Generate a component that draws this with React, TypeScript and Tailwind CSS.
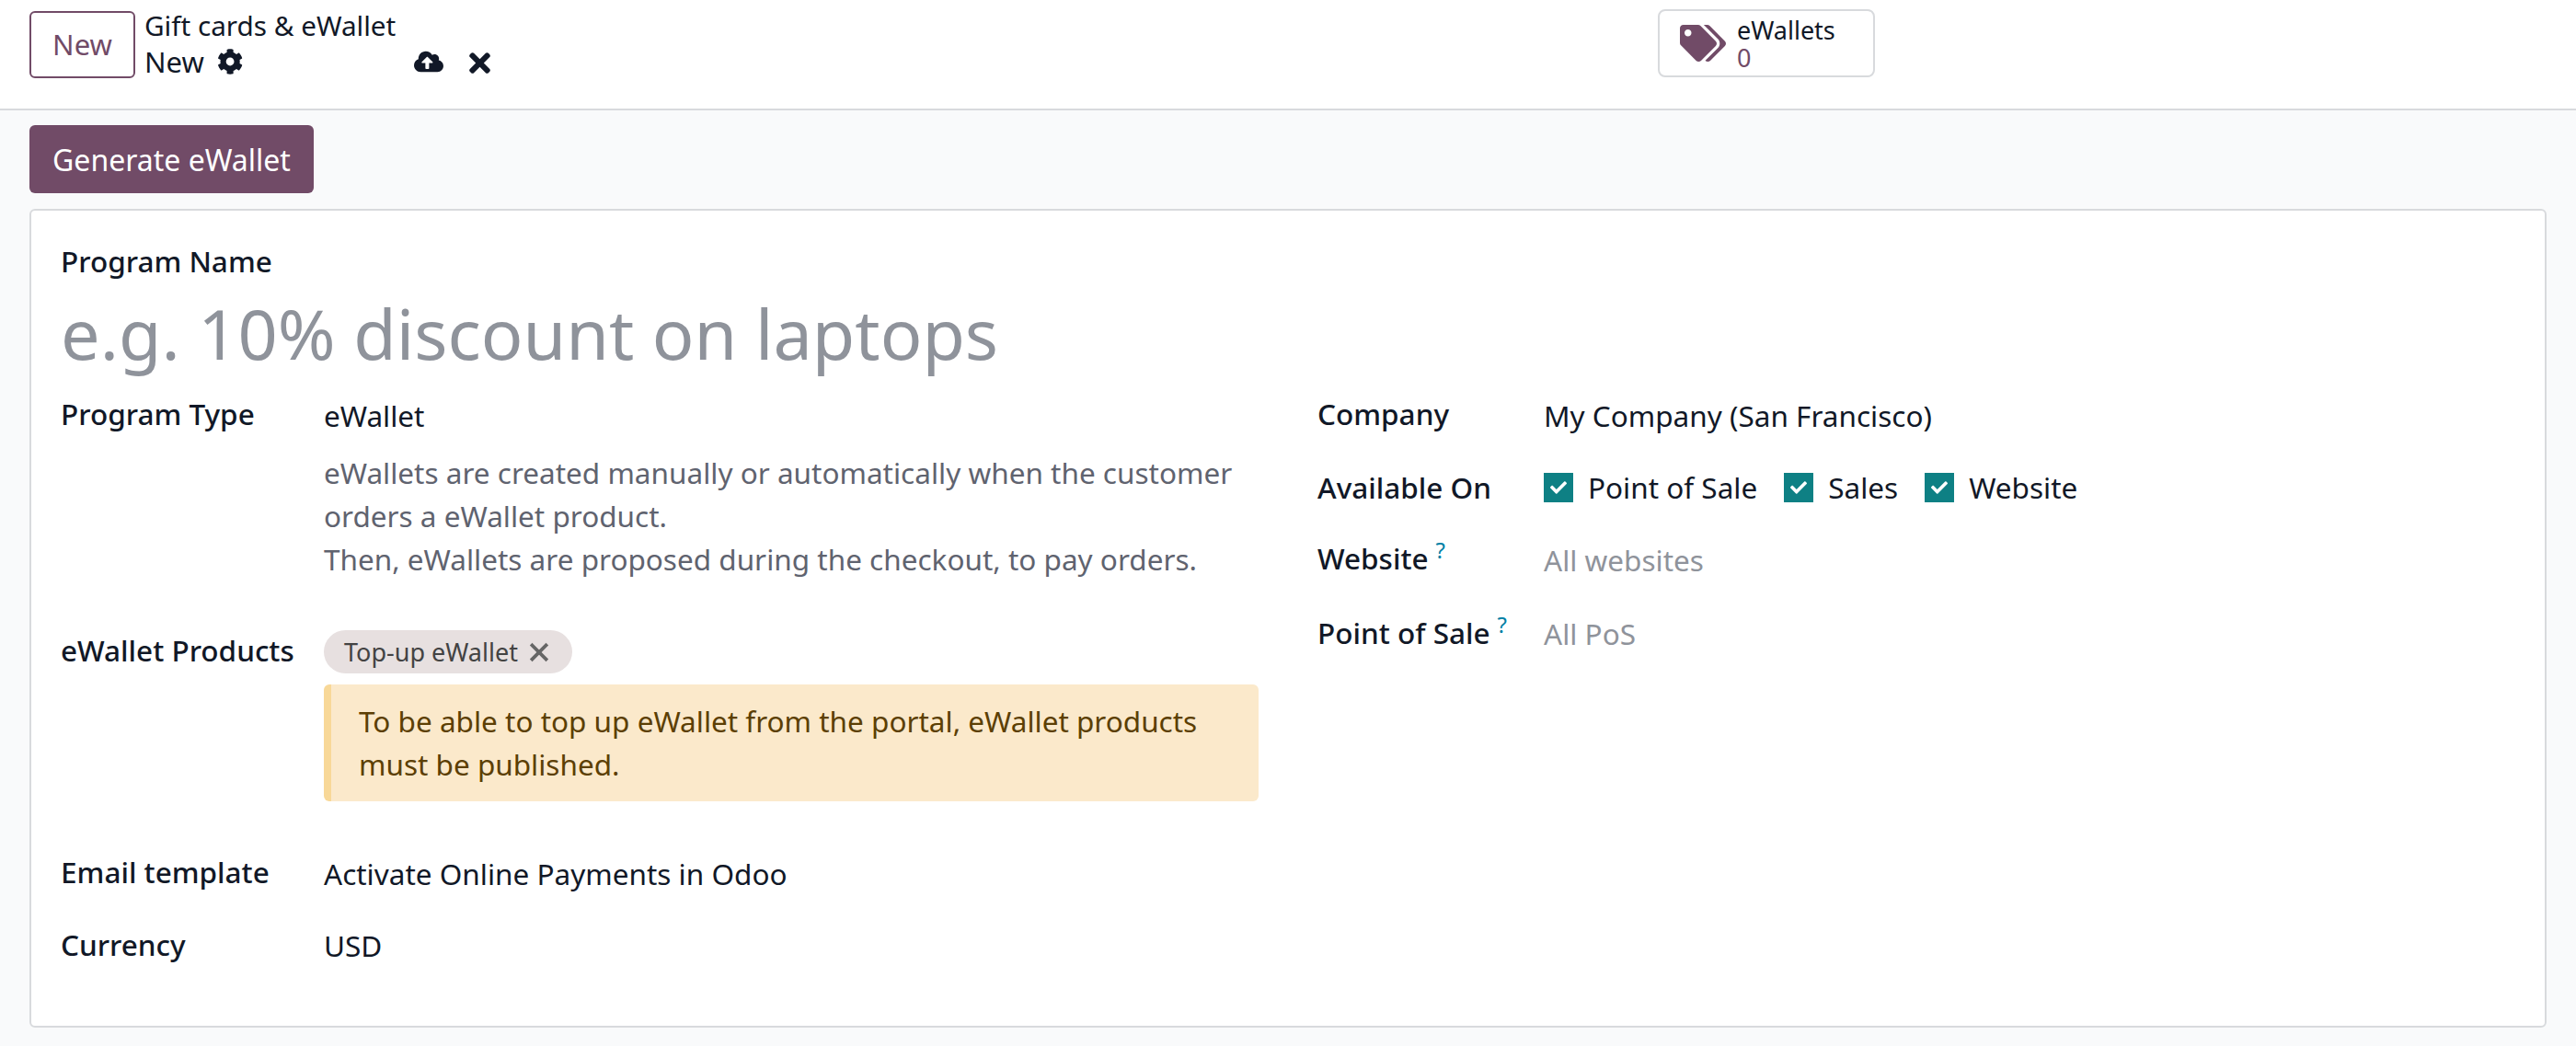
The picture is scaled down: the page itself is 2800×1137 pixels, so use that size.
import { FaCheck, FaCloudUploadAlt, FaCog, FaTags, FaTimes } from "react-icons/fa";
import { X } from "lucide-react";

function Label({ children, help }: { children: string; help?: boolean }) {
  return (
    <div className="font-medium text-[#111827]">
      {children}
      {help && <sup className="ml-[8px] text-[24px] font-normal text-[#0180a5]">?</sup>}
    </div>
  );
}

function Check({ label }: { label: string }) {
  return (
    <div className="flex items-center gap-[16px]">
      <span className="flex h-[32px] w-[32px] items-center justify-center bg-[#0e8084] text-white">
        <FaCheck className="h-[18px] w-[18px]" />
      </span>
      <span>{label}</span>
    </div>
  );
}

export default function App() {
  return (
    <div className="min-h-screen bg-[#f9fafb] font-['Noto_Sans',sans-serif] text-[31.5px] leading-[47px] text-[#111827]">
      <header className="flex h-[120px] border-b-2 border-[#d8dadd] bg-white pl-[32px]">
        <button className="mt-[12px] h-[73px] w-[115px] rounded-[6px] border-2 border-[#714b67] text-[31px] text-[#714b67]">New</button>
        <div className="ml-[10px] mt-[4px] w-[380px]">
          <div className="text-[29.7px] leading-[47px]">Gift cards &amp; eWallet</div>
          <div className="-mt-[4px] flex items-center text-[31px] leading-[40px]">
            New
            <FaCog className="ml-[14px] h-[30px] w-[30px]" />
            <FaCloudUploadAlt className="ml-[186px] h-[34px] w-[34px]" />
            <FaTimes className="ml-[24px] mt-[3px] h-[33px] w-[33px]" />
          </div>
        </div>
        <button className="ml-[1265px] mt-[10px] flex h-[74px] w-[236px] items-center rounded-[8px] border-2 border-[#d8dadd] bg-white pl-[22px] text-left">
          <FaTags className="h-[50px] w-[50px] text-[#714b67]" />
          <span className="ml-[12px] pt-[2px] text-[27px] leading-[30px]">
            eWallets
            <span className="block text-[#714b67]">0</span>
          </span>
        </button>
      </header>

      <main className="px-[32px] pt-[16px]">
        <button className="h-[74px] w-[309px] rounded-[6px] bg-[#714b67] text-[32px] text-white">Generate eWallet</button>

        <section className="mt-[17px] h-[890px] rounded-[6px] border-2 border-[#d8dadd] bg-white px-[32px] pt-[31px]">
          <Label>Program Name</Label>
          <div className="mt-[5px] text-[75.6px] leading-[100px] text-[#8f939b]">e.g. 10% discount on laptops</div>

          <div className="mt-[14px] grid grid-cols-[1366px_1fr]">
            <div className="grid grid-cols-[286px_1016px] content-start">
              <Label>Program Type</Label>
              <div>
                <div className="mt-[2px]">eWallet</div>
                <div className="mt-[15px] text-[#5f636f]">
                  eWallets are created manually or automatically when the customer orders a eWallet product.
                  <br />
                  Then, eWallets are proposed during the checkout, to pay orders.
                </div>
              </div>

              <div className="mt-[52px]"><Label>eWallet Products</Label></div>
              <div className="mt-[52px]">
                <span className="inline-flex h-[47px] items-center gap-[8px] rounded-full bg-[#e7e0e0] pl-[22px] pr-[21px] text-[27px] text-[#434343]">
                  Top-up eWallet
                  <X className="h-[30px] w-[30px] text-[#666666]" strokeWidth={3} strokeLinecap="square" />
                </span>
                <div className="mt-[12px] h-[127px] rounded-[6px] border-l-[8px] border-[#f8d898] bg-[#fbe9cb] py-[16px] pl-[30px] pr-[30px] text-[#5c3f04]">
                  To be able to top up eWallet from the portal, eWallet products must be published.
                </div>
              </div>

              <div className="mt-[53px]"><Label>Email template</Label></div>
              <div className="mt-[55px]">Activate Online Payments in Odoo</div>
              <div className="mt-[30px]"><Label>Currency</Label></div>
              <div className="mt-[31px]">USD</div>
            </div>

            <div className="grid grid-cols-[246px_1fr] content-start">
              <Label>Company</Label>
              <div className="mt-[2px]">My Company (San Francisco)</div>
              <div className="mt-[31px]"><Label>Available On</Label></div>
              <div className="mt-[31px] flex gap-[29px]">
                <Check label="Point of Sale" />
                <Check label="Sales" />
                <Check label="Website" />
              </div>
              <div className="mt-[30px]"><Label help>Website</Label></div>
              <div className="mt-[32px] text-[#8f939b]">All websites</div>
              <div className="mt-[32px]"><Label help>Point of Sale</Label></div>
              <div className="mt-[33px] text-[#8f939b]">All PoS</div>
            </div>
          </div>
        </section>
      </main>
    </div>
  );
}
